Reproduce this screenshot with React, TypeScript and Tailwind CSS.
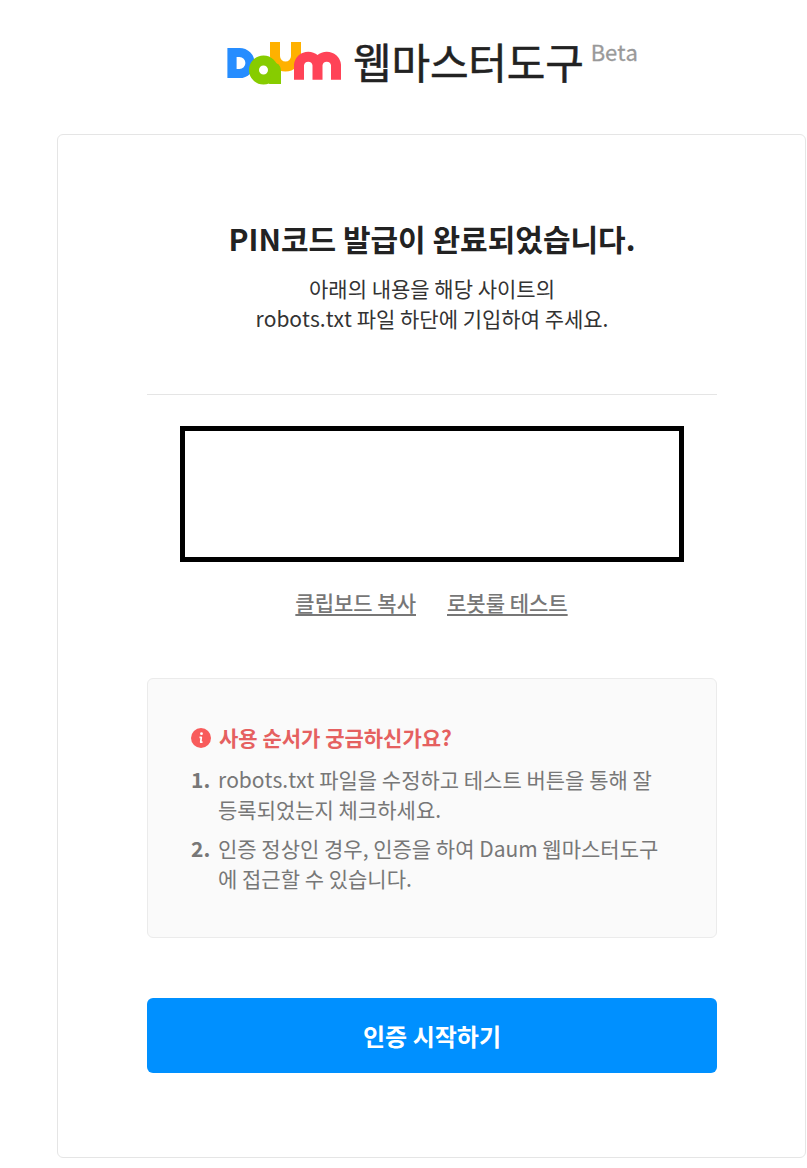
import React from 'react';

const steps = [
    ['robots.txt 파일을 수정하고 테스트 버튼을 통해 잘', '등록되었는지 체크하세요.'],
    ['인증 정상인 경우, 인증을 하여 Daum 웹마스터도구', '에 접근할 수 있습니다.'],
];

const DaumLogo: React.FC = () => (
    <svg width="116" height="44" viewBox="0 0 116 44" fill="none" role="img" aria-label="Daum">
        {/* yellow */}
        <path d="M49 1 V15 A10.500 10.500 0 0 0 70 15 V1" stroke="#ffb100" strokeWidth="10" />
        {/* blue */}
        <path d="M6 11.500 H13.500 A10.500 10.500 0 0 1 13.500 32.500 H6 Z" stroke="#268dff" strokeWidth="9.200" />
        {/* green */}
        <circle cx="37.500" cy="29" r="9.500" stroke="#87cc00" strokeWidth="10" />
        <path d="M47 22 H50 Q55 24 55 30 V43 H43 Z" fill="#87cc00" />
        {/* red */}
        <path d="M73 38.700 V24 A9.300 9.300 0 0 1 91.500 24 V38.700 M91.500 24 A9.300 9.300 0 0 1 110 24 V38.700" stroke="#ff4357" strokeWidth="10" />
    </svg>
);

const InfoIcon: React.FC = () => (
    <svg width="20" height="20" viewBox="0 0 20 20" className="mt-[2px] shrink-0">
        <circle cx="10" cy="10" r="10" fill="#f85b5b" />
        <circle cx="10.500" cy="5.700" r="1.400" fill="#fff" />
        <path d="M8.500 9.300 H10.300 L9.700 14.200 H11.500" fill="none" stroke="#fff" strokeWidth="1.700" strokeLinejoin="round" />
    </svg>
);

export default function App() {
    return (
        <div className="w-[807px] h-[1168px] overflow-hidden bg-white pl-[57px] font-['Noto_Sans_CJK_KR',sans-serif] text-[21px] leading-[30px] text-[#333] [font-kerning:none]">
            <header className="flex h-[134px] items-start pl-[169px] pt-[41px]">
                <DaumLogo />
                <h1 className="ml-[11px] -mt-[10px] text-[42px] leading-[60px] tracking-[-0.2px] whitespace-nowrap text-[#222] [-webkit-text-stroke:0.5px_#222]">웹마스터도구</h1>
                <span className="ml-[7px] -mt-[5px] text-[22px] leading-[30px] text-[#999] [-webkit-text-stroke:0.3px_#999]">Beta</span>
            </header>

            <main className="flex h-[1024px] w-[749px] flex-col rounded-md border border-[#e5e5e5] pr-[88px] pl-[89px] pt-[82px]">
                <div className="h-[178px] border-b border-[#e5e5e5] text-center">
                    <h2 className="text-[30px] leading-[42px] font-bold whitespace-nowrap text-[#222]">PIN코드 발급이 완료되었습니다.</h2>
                    <p className="mt-[14px]">
                        아래의 내용을 해당 사이트의
                        <br />
                        robots.txt 파일 하단에 기입하여 주세요.
                    </p>
                </div>

                <div className="mx-auto mt-[31px] h-[136px] w-[504px] border-[5px] border-black" />

                <div className="mt-[25px] flex justify-center gap-[31px] pr-px font-medium text-[#777]">
                    <a href="#" className="underline decoration-2 underline-offset-[3px]">클립보드 복사</a>
                    <a href="#" className="underline decoration-2 underline-offset-[3px]">로봇룰 테스트</a>
                </div>

                <section className="mt-[61px] h-[260px] rounded-md border border-[#ebebeb] bg-[#fafafa] px-[43px] pt-[43px] text-[#777]">
                    <h3 className="flex items-center gap-2 font-bold text-[#e56060]">
                        <InfoIcon />
                        사용 순서가 궁금하신가요?
                    </h3>
                    <ol className="mt-3 flex flex-col gap-[9px]">
                        {steps.map(([first, second], i) => (
                            <li key={first} className="flex whitespace-nowrap">
                                <span className="w-[27px] shrink-0 font-bold">{i + 1}.</span>
                                <p>
                                    {first}
                                    <br />
                                    {second}
                                </p>
                            </li>
                        ))}
                    </ol>
                </section>

                <button className="mt-[60px] h-[75px] shrink-0 rounded-md bg-[#0090ff] text-2xl font-bold text-white">인증 시작하기</button>
            </main>
        </div>
    );
}
